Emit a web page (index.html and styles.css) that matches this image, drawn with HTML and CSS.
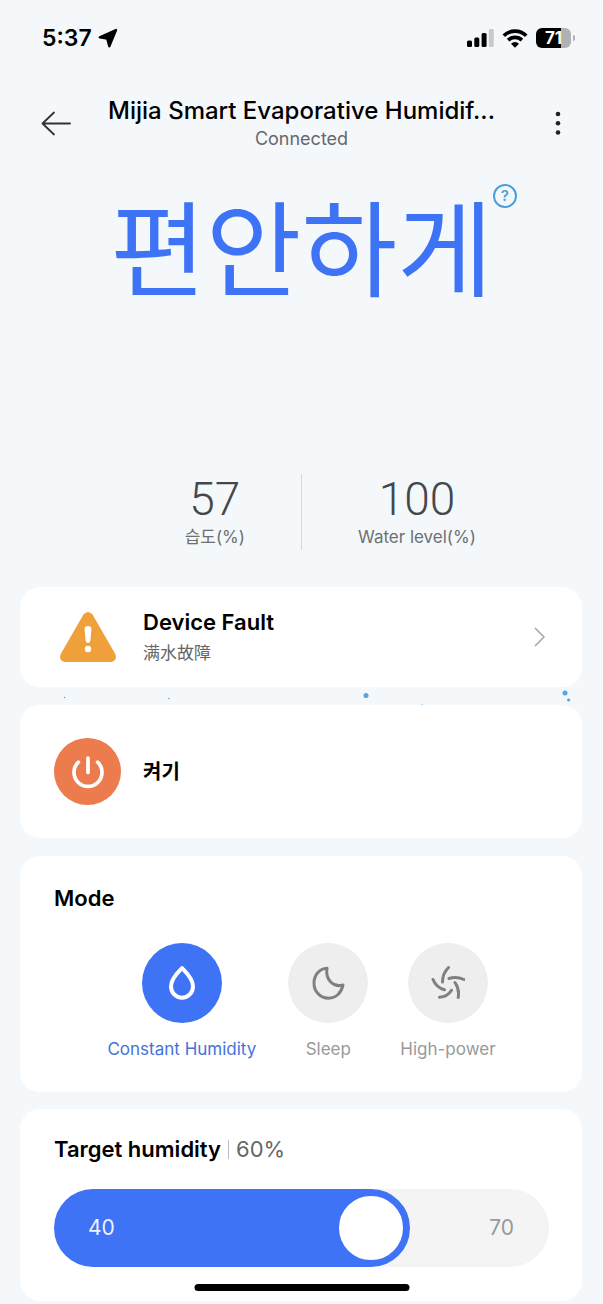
FILE: index.html
```
<!DOCTYPE html>
<html lang="en">
<head>
<meta charset="utf-8">
<meta name="viewport" content="width=device-width, initial-scale=1">
<title>Mijia Smart Evaporative Humidifier</title>
<link rel="stylesheet" href="styles.css">
</head>
<body>
<div class="statusbar">
  <div class="clock">
    <span>5:37</span>
    <svg width="20" height="20" viewBox="0 0 20 20" aria-hidden="true"><path d="M18 2 1.800 9.300 9.200 10.500 11.300 18.200z" stroke="#000" stroke-width="2.400" stroke-linejoin="round"/></svg>
  </div>
  <div class="indicators">
    <svg width="27" height="18" viewBox="0 0 27 18" aria-hidden="true"><rect y="11.500" width="5" height="6.500" rx="1.500"/><rect x="7.300" y="8.500" width="5" height="9.500" rx="1.500"/><rect x="14.600" y="4" width="5" height="14" rx="1.500"/><rect x="21.800" width="5" height="18" rx="1.500" fill="#c7c9cb"/></svg>
    <svg width="26" height="19" viewBox="0 0 26 19" aria-hidden="true"><path d="M1.800 6.800a15.800 15.800 0 0 1 22.400 0M6.100 11.200a9.900 9.900 0 0 1 13.800 0" fill="none" stroke="#000" stroke-width="3.700"/><path d="M13 18.700 9 14.700a5.700 5.700 0 0 1 8 0z"/></svg>
    <div class="battery"><span>71</span></div>
  </div>
</div>

<header class="topbar">
  <button class="icon-button" type="button" aria-label="Back">
    <svg width="30" height="26" viewBox="0 0 30 26" aria-hidden="true"><path d="M29 12.500H1.500M13 1.500 1.500 12.500 13 23.500" fill="none" stroke="#333" stroke-width="1.800" stroke-linecap="round" stroke-linejoin="round"/></svg>
  </button>
  <div class="heading">
    <h1>Mijia Smart Evaporative Humidif...</h1>
    <p>Connected</p>
  </div>
  <button class="icon-button" type="button" aria-label="More">
    <svg width="30" height="26" viewBox="0 0 30 26" fill="#222" aria-hidden="true"><circle cx="15" cy="3" r="2.300"/><circle cx="15" cy="12.200" r="2.300"/><circle cx="15" cy="21.500" r="2.300"/></svg>
  </button>
</header>

<main>
  <section class="hero">
    <div class="comfort" lang="ko">
      <span>편안하게</span>
      <button class="help" type="button" aria-label="Help">?</button>
    </div>
    <div class="stats">
      <div class="stat stat-left"><strong>57</strong><span lang="ko">습도(%)</span></div>
      <div class="divider"></div>
      <div class="stat stat-right"><strong>100</strong><span>Water level(%)</span></div>
    </div>
  </section>

  <button class="card fault" type="button">
    <span class="lead"><svg width="56" height="50" viewBox="0 0 56 50" aria-hidden="true"><path d="M23.500 2.600Q28-2.500 32.500 2.600L55 41.500Q58 49 50.500 50H5.500Q-2 49 1 41.500Z" fill="#f0a03a"/><path d="M24.600 17.500a3.400 3.400 0 0 1 6.800 0l-1 11a2.400 2.400 0 0 1-4.800 0z" fill="#fff"/><circle cx="28" cy="37" r="3.200" fill="#fff"/></svg></span>
    <span class="fault-text"><b>Device Fault</b><span lang="zh">满水故障</span></span>
    <svg width="12" height="20" viewBox="0 0 12 20" aria-hidden="true"><path d="M1.500 1.500 10 10 1.500 18.500" fill="none" stroke="#aaa" stroke-width="1.700" stroke-linecap="round" stroke-linejoin="round"/></svg>
  </button>

  <svg class="droplets" height="18" fill="#55a5e2" aria-hidden="true"><circle cx="10.700%" cy="10.500" r="0.800"/><circle cx="28%" cy="11.500" r="0.800"/><circle cx="60.700%" cy="8.500" r="2.500"/><circle cx="70%" cy="17.500" r="0.500"/><circle cx="93.700%" cy="6" r="2.500"/><circle cx="94.300%" cy="13" r="1.600"/></svg>

  <button class="card power" type="button">
    <span class="lead power-icon"><svg width="32" height="34" viewBox="0 0 32 34" fill="none" stroke="#fff" stroke-width="3.700" stroke-linecap="round" aria-hidden="true"><path d="M16 3v14.500M6.400 7.200a14 14 0 1 0 19.200 0"/></svg></span>
    <b lang="ko">켜기</b>
  </button>

  <section class="card mode">
    <h2>Mode</h2>
    <div class="modes">
      <button class="mode-item active" type="button" aria-pressed="true">
        <span class="disc"><svg width="34" height="34" viewBox="0 0 34 34" aria-hidden="true"><path d="M17 2.200C14 5.500 6 12 6 20.400a11 11.300 0 0 0 22 0C28 12 20 5.500 17 2.200z"/></svg></span>
        <span>Constant Humidity</span>
      </button>
      <button class="mode-item" type="button" aria-pressed="false">
        <span class="disc"><svg width="34" height="34" viewBox="0 0 34 34" aria-hidden="true"><path d="M16 2.200C8.500 2.500 3 9 3 17.200c0 8.500 6.500 15 14.500 15 7.500 0 13-5.500 14.500-13.300C22.500 22 14 13.500 16 2.200z"/></svg></span>
        <span>Sleep</span>
      </button>
      <button class="mode-item" type="button" aria-pressed="false">
        <span class="disc"><svg width="34" height="34" viewBox="0 0 34 34" aria-hidden="true"><path d="M17.500 1.500C14 5 11.500 9.500 11.500 16M33 13.500C28.500 11.500 23.500 10.700 18 12.500M27.200 31.500C28.200 26 27.500 21.500 24 16.500M8.500 31.300C13.500 31 18 28.500 20.500 24.300M2 13.500C4 18.500 7.500 22.200 13.500 23.800"/></svg></span>
        <span>High-power</span>
      </button>
    </div>
  </section>

  <section class="card target">
    <div class="target-head">
      <label for="humidity">Target humidity</label>
      <span class="bar"></span>
      <output for="humidity">60%</output>
    </div>
    <div class="slider">
      <input id="humidity" type="range" min="40" max="70" value="60">
      <span class="limit low">40</span>
      <span class="limit high">70</span>
    </div>
  </section>
</main>
<div class="home-indicator"></div>
</body>
</html>
```
FILE: styles.css
```
* { box-sizing: border-box; }
body {
  margin: 0;
  background: #f4f8fb;
  color: #000;
  font-family: Inter, "Noto Sans CJK KR", sans-serif;
}
h1, h2, p { margin: 0; }
button {
  border: 0;
  padding: 0;
  background: none;
  color: inherit;
  font: inherit;
  cursor: pointer;
}
svg { display: block; flex-shrink: 0; }

.statusbar {
  display: flex;
  align-items: center;
  justify-content: space-between;
  height: 76px;
  padding: 0 28px 0 42px;
}
.clock, .indicators { display: flex; align-items: center; }
.clock { gap: 6px; font-size: 23px; font-weight: 600; }
.indicators { gap: 8px; }
.battery {
  position: relative;
  width: 35px;
  height: 20px;
  margin-right: 4px;
  border-radius: 6px;
  background: linear-gradient(to right, #000 71%, #aeb2b4 71%);
  color: #fff;
  font-size: 17px;
  font-weight: 700;
  line-height: 20px;
  text-align: center;
}
.battery::after {
  content: "";
  position: absolute;
  top: 7px;
  right: -4px;
  width: 2px;
  height: 6px;
  border-radius: 0 3px 3px 0;
  background: #aeb2b4;
}

.topbar {
  display: flex;
  align-items: center;
  justify-content: space-between;
  padding: 20px 30px 0;
}
.icon-button { display: flex; justify-content: flex-end; width: 41px; }
.heading { min-width: 0; text-align: center; }
.heading h1 { font-size: 24px; font-weight: 500; line-height: 30px; }
.heading p { color: #66696c; font-size: 18px; line-height: 26px; }

.hero { padding: 17px 0 37px; }
.comfort {
  position: relative;
  width: max-content;
  margin: 0 auto;
  color: #3e73f5;
  font-family: "Noto Sans CJK KR", sans-serif;
  font-size: 104px;
  line-height: 150px;
}
.help {
  position: absolute;
  top: 15px;
  right: -24px;
  width: 24px;
  height: 24px;
  border: 2px solid #4c9fdc;
  border-radius: 50%;
  color: #4c9fdc;
  font-family: Inter, sans-serif;
  font-size: 15px;
  font-weight: 600;
  line-height: 20px;
}
.stats {
  display: grid;
  grid-template-columns: 1fr 1px 1fr;
  column-gap: 56px;
  margin-top: 155px;
}
.divider { background: #d5d9dc; }
.stat {
  display: flex;
  flex-direction: column;
  align-items: center;
  color: #6c7073;
  font-size: 17px;
  line-height: 26px;
}
.stat strong {
  color: #44484b;
  font-family: Roboto, sans-serif;
  font-size: 46px;
  font-weight: 300;
  line-height: 50px;
}
.stat-left { justify-self: end; }
.stat-right { justify-self: start; }

main { padding-bottom: 3px; }
.card {
  display: block;
  width: calc(100% - 41px);
  margin-left: 20px;
  padding: 0 33px 0 34px;
  border-radius: 20px;
  background: #fff;
}
.fault, .power {
  display: flex;
  align-items: center;
  gap: 22px;
  text-align: left;
}
.fault { min-height: 100px; padding-right: 36px; }
.lead {
  display: grid;
  place-items: center;
  width: 67px;
  flex-shrink: 0;
}
.fault-text { display: flex; flex: 1; flex-direction: column; gap: 2px; }
.fault b, .power b, .mode h2, .target label { font-size: 22px; font-weight: 600; line-height: 28px; }
.fault-text span {
  color: #666;
  font-family: "Noto Sans CJK SC", sans-serif;
  font-size: 17px;
  line-height: 28px;
}
.droplets { width: 100%; }
.power { min-height: 133px; margin-bottom: 18px; }
.power b { font-size: 20px; }
.power-icon { height: 67px; border-radius: 50%; background: #ec7b4d; }

.mode { margin-bottom: 17px; padding-top: 28px; padding-bottom: 30px; }
.modes { display: flex; justify-content: center; gap: 32px; margin-top: 31px; }
.mode-item {
  display: flex;
  flex-direction: column;
  align-items: center;
  gap: 13px;
  color: #999;
  font-size: 17px;
  line-height: 26px;
}
.disc {
  display: grid;
  place-items: center;
  width: 80px;
  height: 80px;
  border-radius: 50%;
  background: #eee;
}
.disc svg {
  fill: none;
  stroke: #808080;
  stroke-width: 3;
  stroke-linecap: round;
  stroke-linejoin: round;
}
.active { color: #4472dc; }
.active .disc { background: #3e73f5; }
.active svg { stroke: #fff; stroke-width: 4; }

.target { padding-top: 26px; padding-bottom: 34px; }
.target-head { display: flex; align-items: center; gap: 7px; }
.bar { width: 1px; height: 19px; background: #bbb; }
.target output { color: #666; font-size: 22px; line-height: 28px; }
.slider { position: relative; margin-top: 26px; }
.slider input {
  display: block;
  width: 100%;
  height: 78px;
  margin: 0;
  border-radius: 39px;
  background: linear-gradient(to right, #3e73f5 64%, #f4f4f4 64%);
  appearance: none;
}
.slider input::-webkit-slider-thumb {
  width: 78px;
  height: 78px;
  border: 7px solid #3e73f5;
  border-radius: 50%;
  background: #fff;
  appearance: none;
}
.limit {
  position: absolute;
  top: 0;
  font-size: 21px;
  line-height: 78px;
  pointer-events: none;
}
.low { left: 34px; color: #edf2ff; }
.high { right: 35px; color: #999; }

.home-indicator {
  position: fixed;
  bottom: 13px;
  left: 50%;
  width: 215px;
  height: 7px;
  border-radius: 4px;
  background: #000;
  transform: translateX(-50%);
}
```
